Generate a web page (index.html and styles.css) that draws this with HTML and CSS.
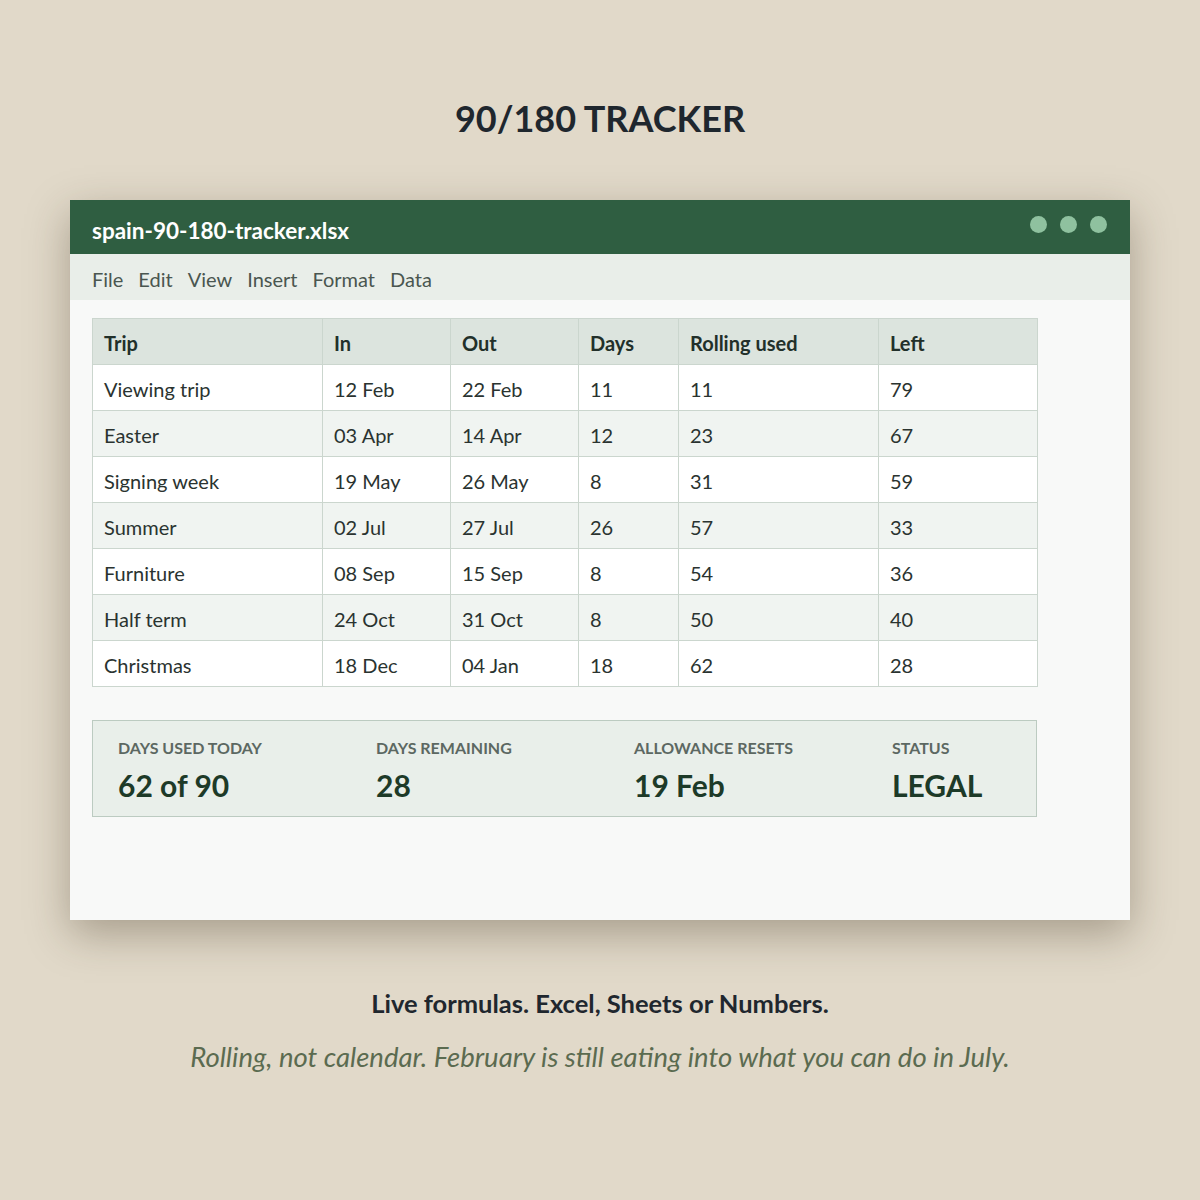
FILE: index.html
```html
<!DOCTYPE html>
<html>
<head>
<meta charset="utf-8">
<link rel="stylesheet" href="styles.css">
</head>
<body>
<div class="page">
  <h1 class="title">90/180 TRACKER</h1>
  <div class="window">
    <div class="titlebar">
      <span class="filename">spain-90-180-tracker.xlsx</span>
      <div class="dots"><span class="dot"></span><span class="dot"></span><span class="dot"></span></div>
    </div>
    <div class="menubar">
      <span>File</span><span>Edit</span><span>View</span><span>Insert</span><span>Format</span><span>Data</span>
    </div>
    <div class="sheet">
      <table class="grid">
        <colgroup>
          <col class="c1"><col class="c2"><col class="c3"><col class="c4"><col class="c5"><col class="c6">
        </colgroup>
        <thead>
          <tr><th>Trip</th><th>In</th><th>Out</th><th>Days</th><th>Rolling used</th><th>Left</th></tr>
        </thead>
        <tbody>
          <tr><td>Viewing trip</td><td>12 Feb</td><td>22 Feb</td><td>11</td><td>11</td><td>79</td></tr>
          <tr><td>Easter</td><td>03 Apr</td><td>14 Apr</td><td>12</td><td>23</td><td>67</td></tr>
          <tr><td>Signing week</td><td>19 May</td><td>26 May</td><td>8</td><td>31</td><td>59</td></tr>
          <tr><td>Summer</td><td>02 Jul</td><td>27 Jul</td><td>26</td><td>57</td><td>33</td></tr>
          <tr><td>Furniture</td><td>08 Sep</td><td>15 Sep</td><td>8</td><td>54</td><td>36</td></tr>
          <tr><td>Half term</td><td>24 Oct</td><td>31 Oct</td><td>8</td><td>50</td><td>40</td></tr>
          <tr><td>Christmas</td><td>18 Dec</td><td>04 Jan</td><td>18</td><td>62</td><td>28</td></tr>
        </tbody>
      </table>
      <div class="summary">
        <div class="stat"><div class="label">DAYS USED TODAY</div><div class="value">62 of 90</div></div>
        <div class="stat"><div class="label">DAYS REMAINING</div><div class="value">28</div></div>
        <div class="stat"><div class="label">ALLOWANCE RESETS</div><div class="value">19 Feb</div></div>
        <div class="stat"><div class="label">STATUS</div><div class="value">LEGAL</div></div>
      </div>
    </div>
  </div>
  <p class="tagline">Live formulas. Excel, Sheets or Numbers.</p>
  <p class="note">Rolling, not calendar. February is still eating into what you can do in July.</p>
</div>
</body>
</html>
```
FILE: styles.css
```css
html, body {
  margin: 0;
  padding: 0;
}
body {
  background: #e1d9c9;
  font-family: Lato, "Liberation Sans", sans-serif;
  width: 1200px;
  height: 1200px;
  overflow: hidden;
}
.page {
  padding-top: 96px;
}
.title {
  margin: 0;
  text-align: center;
  font-size: 36px;
  line-height: 44px;
  font-weight: 700;
  color: #1f272e;
}
.window {
  margin: 60px 0 0 70px;
  width: 1060px;
  height: 720px;
  background: #f8f9f8;
  box-shadow: 0 14px 40px rgba(60, 45, 25, 0.35);
  display: flex;
  flex-direction: column;
}
.titlebar {
  height: 54px;
  background: #2f5e41;
  display: flex;
  align-items: center;
  justify-content: space-between;
  padding: 0 23px 0 22px;
}
.filename {
  color: #ffffff;
  font-weight: 700;
  font-size: 22.5px;
  padding-top: 6px;
}
.dots {
  display: flex;
  gap: 13px;
  padding-bottom: 6px;
}
.dot {
  width: 17px;
  height: 17px;
  border-radius: 50%;
  background: #8fc19f;
}
.menubar {
  height: 46px;
  background: #e9eee9;
  display: flex;
  align-items: center;
  gap: 15px;
  padding: 0 22px;
  font-size: 20px;
  color: #4a5650;
}
.menubar span {
  padding-top: 4px;
}
.sheet {
  padding: 18px 22px 0 22px;
}
.grid {
  border-collapse: collapse;
  width: 945px;
  table-layout: fixed;
  font-size: 20px;
  color: #2a3330;
}
.c1 { width: 230px; }
.c2 { width: 128px; }
.c3 { width: 128px; }
.c4 { width: 100px; }
.c5 { width: 200px; }
.c6 { width: 159px; }
.grid th, .grid td {
  border: 1px solid #cbd6ce;
  height: 43px;
  padding: 2px 11px 0 11px;
  text-align: left;
}
.grid th {
  background: #dce4de;
  font-weight: 700;
  color: #22302a;
}
.grid tbody tr:nth-child(odd) td {
  background: #ffffff;
}
.grid tbody tr:nth-child(even) td {
  background: #f0f4f1;
}
.summary {
  margin-top: 33px;
  background: #e9efea;
  border: 1px solid #bccbc1;
  display: grid;
  grid-template-columns: 258px 258px 258px 1fr;
  padding-left: 25px;
  box-sizing: border-box;
  width: 945px;
  height: 97px;
  align-content: center;
}
.label {
  font-size: 16px;
  font-weight: 700;
  color: #5c6862;
  line-height: 20px;
}
.value {
  font-size: 30px;
  font-weight: 700;
  color: #1d3a28;
  line-height: 38px;
  margin-top: 8px;
}
.summary .stat {
  margin-top: 4px;
}
.tagline {
  margin: 70px 0 0 0;
  text-align: center;
  font-size: 25.5px;
  line-height: 26px;
  font-weight: 700;
  color: #1f272e;
}
.note {
  margin: 26px 0 0 0;
  text-align: center;
  font-size: 27.5px;
  line-height: 30px;
  font-style: italic;
  color: #5b6b50;
}
```
